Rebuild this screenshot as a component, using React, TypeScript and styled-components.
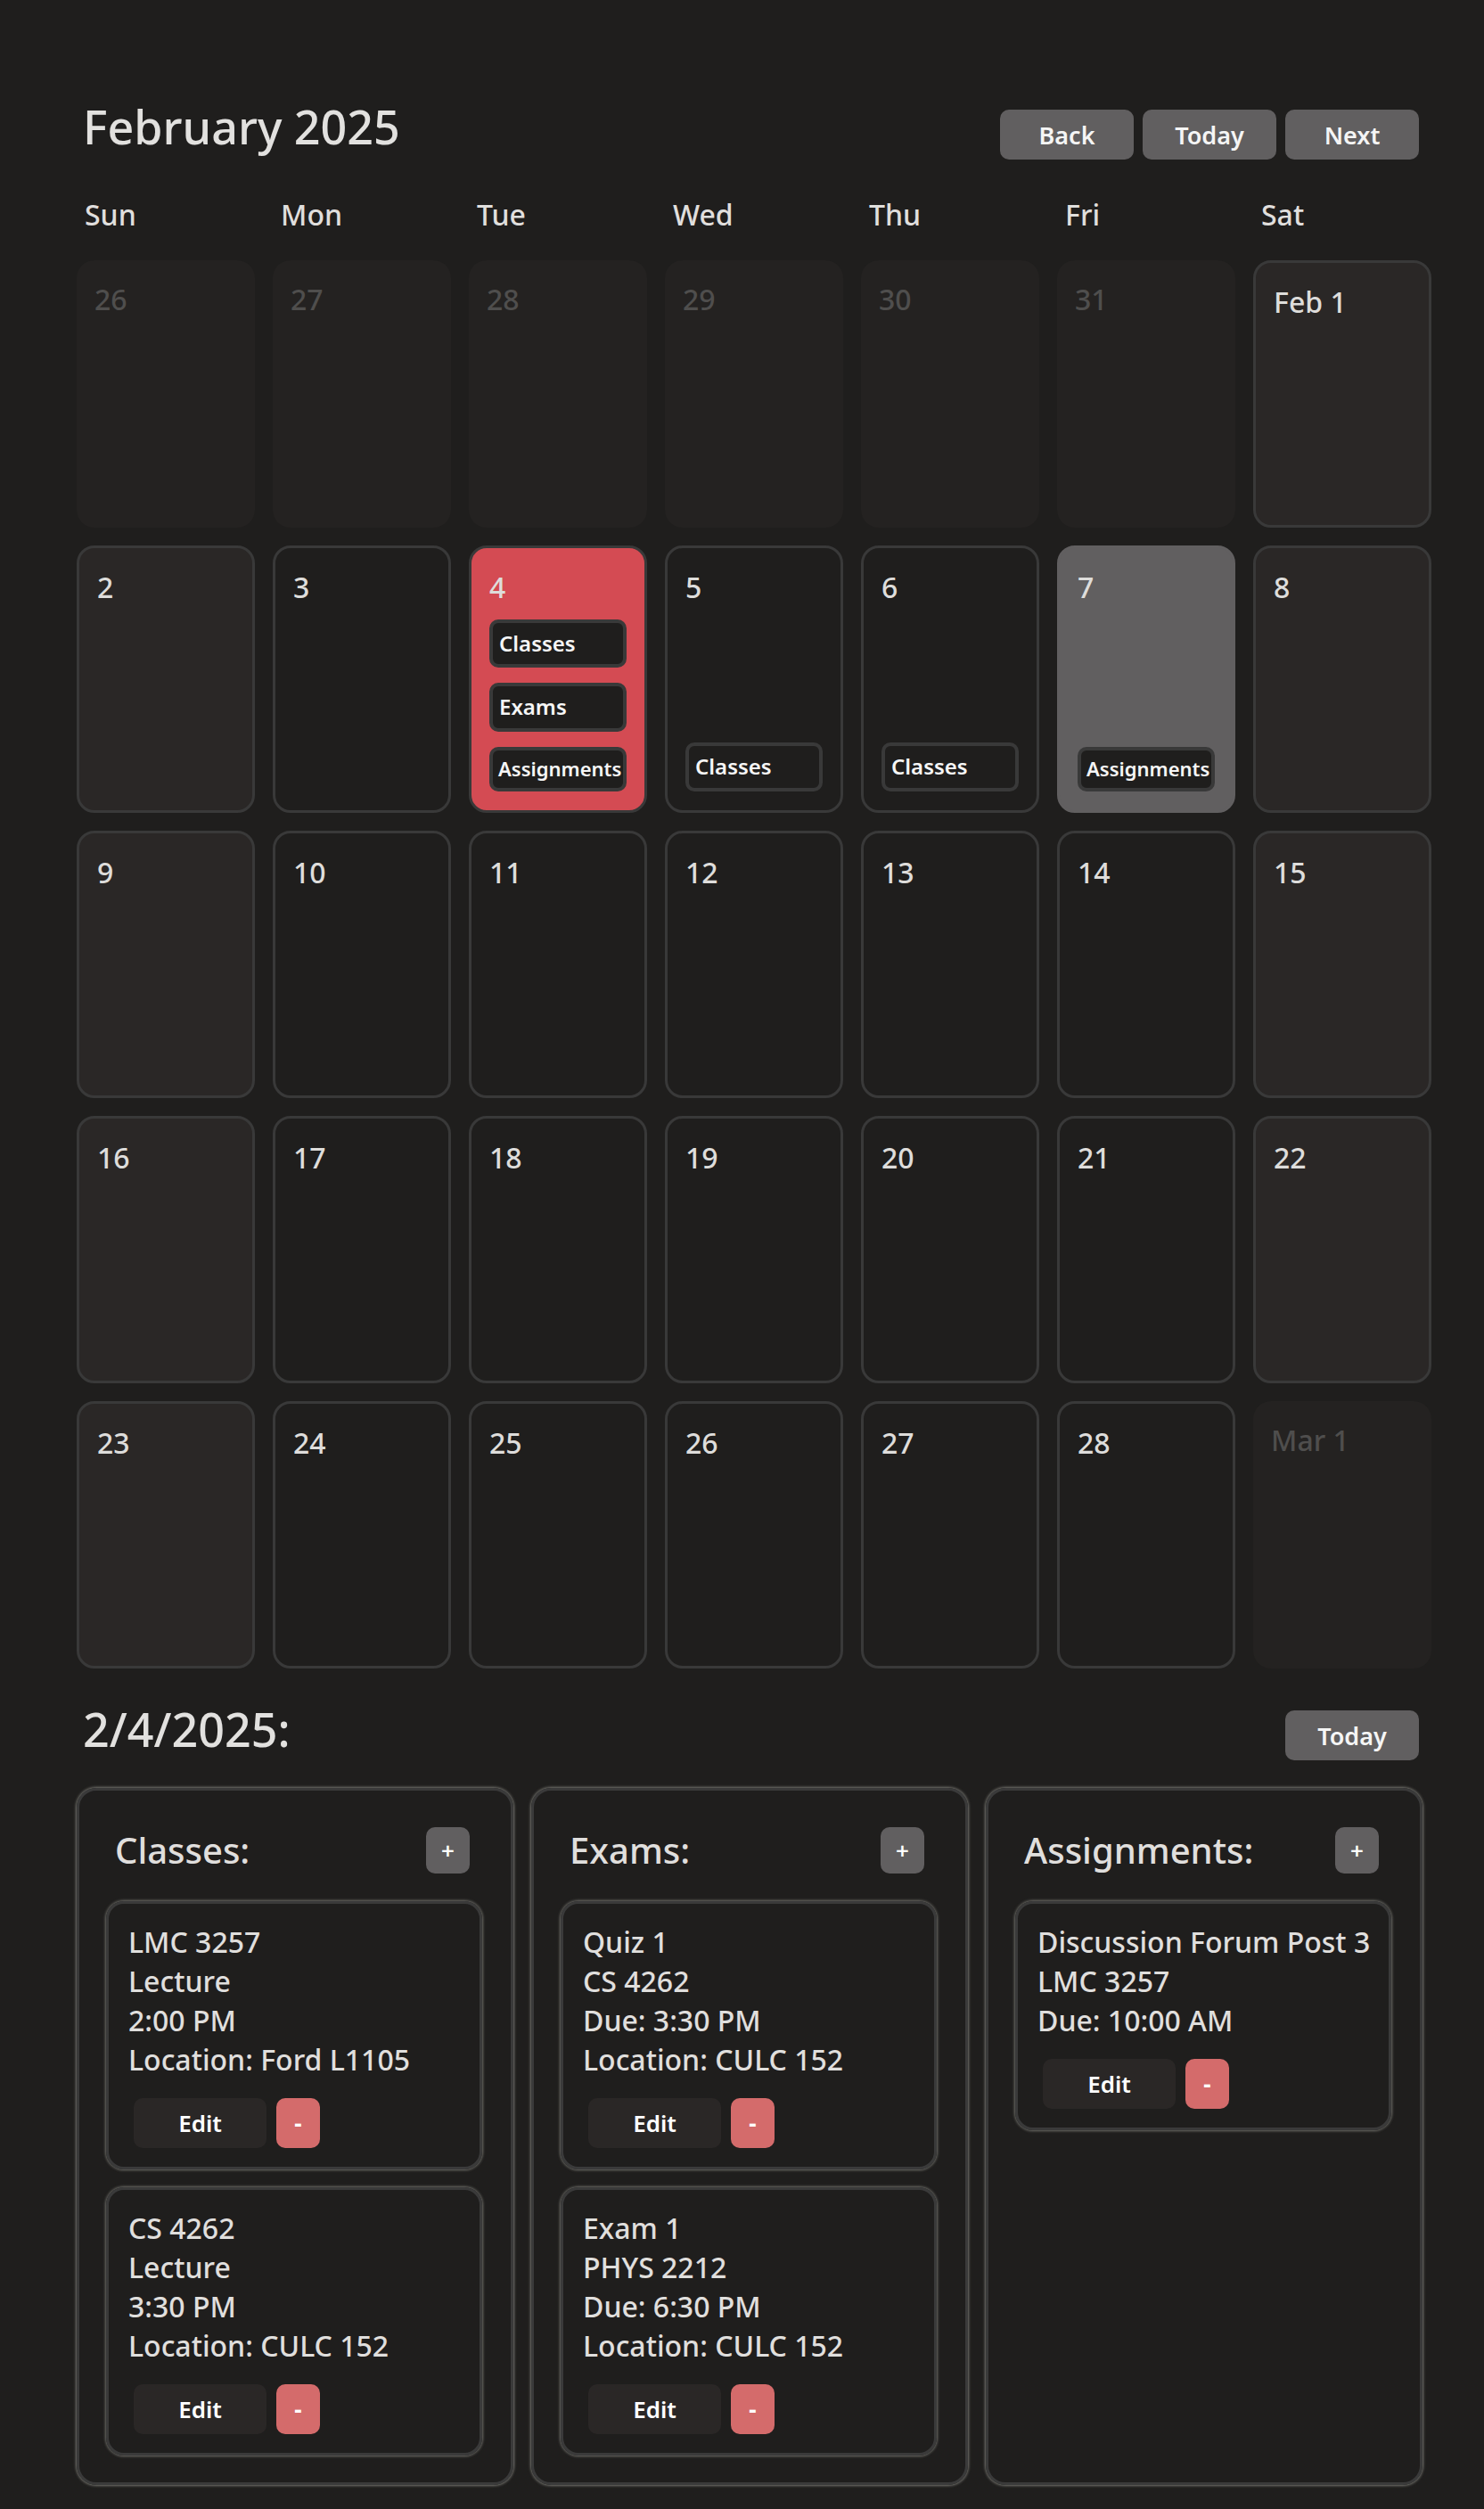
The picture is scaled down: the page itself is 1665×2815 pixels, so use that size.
import * as React from 'react';
import styled, { createGlobalStyle, css } from 'styled-components';

const GlobalStyle = createGlobalStyle`
  html, body {
    margin: 0;
    padding: 0;
    background: #1f1e1d;
  }
  body {
    font-family: 'Noto Sans', 'Open Sans', sans-serif;
    font-weight: 500;
    color: #e0dfdd;
  }
  * {
    box-sizing: border-box;
  }
`;

const Page = styled.div`
  width: 1665px;
  min-height: 2815px;
  padding: 106px 59px 25px 86px;
  background: #1f1e1d;
`;

const HeaderRow = styled.div`
  display: flex;
  align-items: flex-end;
  justify-content: space-between;
  padding: 0 14px 0 7px;
`;

const Title = styled.h1`
  margin: 0;
  font-size: 52px;
  font-weight: 500;
  color: #e2e1df;
`;

const ButtonGroup = styled.div`
  display: flex;
  gap: 10px;
  margin-bottom: -2px;
`;

const NavButton = styled.button`
  width: 150px;
  height: 56px;
  border: none;
  border-radius: 10px;
  background: #615f60;
  color: #f5f5f5;
  font-family: inherit;
  font-size: 27px;
  font-weight: 600;
  cursor: pointer;
`;

const WeekdayRow = styled.div`
  display: grid;
  grid-template-columns: repeat(7, 200px);
  column-gap: 20px;
  margin-top: 42px;
`;

const Weekday = styled.div`
  padding-left: 9px;
  font-size: 32px;
  color: #e0dfdd;
`;

const Grid = styled.div`
  display: grid;
  grid-template-columns: repeat(7, 200px);
  grid-auto-rows: 300px;
  gap: 20px;
  margin-top: 30px;
`;

type CellKind = 'muted' | 'normal' | 'weekend' | 'selected' | 'today';

const cellColors = {
  muted: css`
    background: #242221;
    border-width: 0;
    color: #4f4e4d;
  `,
  normal: css`
    background: #1f1e1d;
    border-color: #393939;
  `,
  weekend: css`
    background: #2a2726;
    border-color: #393939;
  `,
  selected: css`
    background: #d44b53;
    border-color: #393939;
  `,
  today: css`
    background: #615f60;
    border-color: #615f60;
  `,
};

const Cell = styled.div<{ $kind: CellKind }>`
  display: flex;
  flex-direction: column;
  padding: 22px 20px 21px;
  border: 3px solid transparent;
  border-radius: 20px;
  color: #dedddb;
  ${(p) => cellColors[p.$kind]}
`;

const DayNumber = styled.div`
  font-size: 32px;
  line-height: 1.36;
`;

const ChipList = styled.div`
  margin-top: auto;
  display: flex;
  flex-direction: column;
  gap: 17px;
`;

const Chip = styled.div<{ $small?: boolean }>`
  padding: ${(p) => (p.$small ? '6px 6px' : '7px 7px')};
  border: 4px solid #393939;
  border-radius: 10px;
  background: #1f1e1d;
  color: #f6f6f6;
  font-size: ${(p) => (p.$small ? '22px' : '24px')};
  font-weight: 600;
  line-height: 1.36;
  white-space: nowrap;
`;

const DayHeaderRow = styled(HeaderRow)`
  margin-top: 32px;
  padding-right: 14px;
  width: 1520px;
`;

const Panels = styled.div`
  display: grid;
  grid-template-columns: repeat(3, 490px);
  gap: 20px;
  margin-top: 31px;
`;

const Panel = styled.section`
  display: flex;
  flex-direction: column;
  gap: 20px;
  padding: 40px 32px 30px 30px;
  border: 3px solid #3a3a3a;
  border-radius: 22px;
  box-shadow: 0 0 3px 1px rgba(190, 190, 180, 0.55);
`;

const PanelHead = styled.div`
  display: flex;
  align-items: center;
  justify-content: space-between;
  padding: 0 14px 0 10px;
  margin-bottom: 10px;
`;

const PanelTitle = styled.h2`
  margin: 0;
  font-size: 40px;
  font-weight: 500;
  line-height: 1.36;
  color: #e0dfdd;
`;

const AddButton = styled.button`
  width: 49px;
  height: 52px;
  border: none;
  border-radius: 10px;
  background: #615f60;
  color: #ffffff;
  font-family: inherit;
  font-size: 26px;
  font-weight: 600;
  line-height: 1;
  cursor: pointer;
`;

const ItemCard = styled.div`
  padding: 21px 22px;
  border: 3px solid #3a3a3a;
  border-radius: 20px;
  box-shadow: 0 0 3px 1px rgba(190, 190, 180, 0.5);
`;

const ItemLine = styled.div`
  font-size: 32px;
  line-height: 44px;
  color: #e0dfdd;
  white-space: nowrap;
`;

const ItemActions = styled.div`
  display: flex;
  gap: 11px;
  margin: 21px 0 0 6px;
`;

const EditButton = styled.button`
  width: 149px;
  height: 56px;
  border: none;
  border-radius: 10px;
  background: #2a2726;
  color: #ffffff;
  font-family: inherit;
  font-size: 26px;
  font-weight: 600;
  cursor: pointer;
`;

const RemoveButton = styled.button`
  width: 49px;
  height: 56px;
  border: none;
  border-radius: 10px;
  background: #d46b6b;
  color: #ffffff;
  font-family: inherit;
  font-size: 26px;
  font-weight: 700;
  cursor: pointer;
`;

type Day = {
  label: string;
  kind: CellKind;
  chips?: string[];
};

const weekdays = ['Sun', 'Mon', 'Tue', 'Wed', 'Thu', 'Fri', 'Sat'];

function buildWeeks(): Day[][] {
  const weeks: Day[][] = [];
  const first: Day[] = ['26', '27', '28', '29', '30', '31'].map((l) => ({
    label: l,
    kind: 'muted' as CellKind,
  }));
  first.push({ label: 'Feb 1', kind: 'weekend' });
  weeks.push(first);

  const events: Record<number, string[]> = {
    4: ['Classes', 'Exams', 'Assignments'],
    5: ['Classes'],
    6: ['Classes'],
    7: ['Assignments'],
  };

  let n = 2;
  for (let w = 0; w < 4; w++) {
    const row: Day[] = [];
    for (let d = 0; d < 7; d++) {
      if (n > 28) {
        row.push({ label: 'Mar 1', kind: 'muted' });
        continue;
      }
      let kind: CellKind = d === 0 || d === 6 ? 'weekend' : 'normal';
      if (n === 4) kind = 'selected';
      if (n === 7) kind = 'today';
      row.push({ label: String(n), kind, chips: events[n] });
      n++;
    }
    weeks.push(row);
  }
  return weeks;
}

const weeks = buildWeeks();

type Item = { lines: string[] };

const sections: { title: string; items: Item[] }[] = [
  {
    title: 'Classes:',
    items: [
      { lines: ['LMC 3257', 'Lecture', '2:00 PM', 'Location: Ford L1105'] },
      { lines: ['CS 4262', 'Lecture', '3:30 PM', 'Location: CULC 152'] },
    ],
  },
  {
    title: 'Exams:',
    items: [
      { lines: ['Quiz 1', 'CS 4262', 'Due: 3:30 PM', 'Location: CULC 152'] },
      { lines: ['Exam 1', 'PHYS 2212', 'Due: 6:30 PM', 'Location: CULC 152'] },
    ],
  },
  {
    title: 'Assignments:',
    items: [{ lines: ['Discussion Forum Post 3', 'LMC 3257', 'Due: 10:00 AM'] }],
  },
];

export default function App() {
  return (
    <>
      <GlobalStyle />
      <Page>
        <HeaderRow>
          <Title>February 2025</Title>
          <ButtonGroup>
            <NavButton>Back</NavButton>
            <NavButton>Today</NavButton>
            <NavButton>Next</NavButton>
          </ButtonGroup>
        </HeaderRow>

        <WeekdayRow>
          {weekdays.map((d) => (
            <Weekday key={d}>{d}</Weekday>
          ))}
        </WeekdayRow>

        <Grid>
          {weeks.flat().map((day, i) => (
            <Cell key={i} $kind={day.kind}>
              <DayNumber>{day.label}</DayNumber>
              {day.chips && (
                <ChipList>
                  {day.chips.map((c) => (
                    <Chip key={c} $small={c === 'Assignments'}>
                      {c}
                    </Chip>
                  ))}
                </ChipList>
              )}
            </Cell>
          ))}
        </Grid>

        <DayHeaderRow>
          <Title>2/4/2025:</Title>
          <NavButton>Today</NavButton>
        </DayHeaderRow>

        <Panels>
          {sections.map((s) => (
            <Panel key={s.title}>
              <PanelHead>
                <PanelTitle>{s.title}</PanelTitle>
                <AddButton>+</AddButton>
              </PanelHead>
              {s.items.map((item, i) => (
                <ItemCard key={i}>
                  {item.lines.map((l) => (
                    <ItemLine key={l}>{l}</ItemLine>
                  ))}
                  <ItemActions>
                    <EditButton>Edit</EditButton>
                    <RemoveButton>-</RemoveButton>
                  </ItemActions>
                </ItemCard>
              ))}
            </Panel>
          ))}
        </Panels>
      </Page>
    </>
  );
}
